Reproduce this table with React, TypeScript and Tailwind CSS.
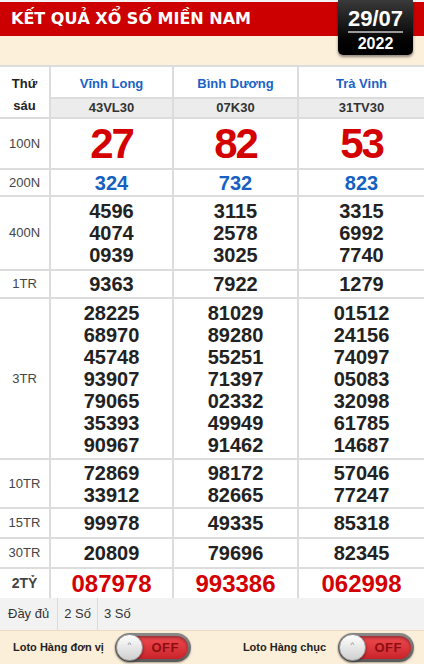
const stations = [
  { name: "Vĩnh Long", code: "43VL30" },
  { name: "Bình Dương", code: "07K30" },
  { name: "Trà Vinh", code: "31TV30" },
];

type Prize = {
  label: string;
  h: string;
  kind: "big" | "blue" | "normal" | "special";
  values: string[][];
};

const prizes: Prize[] = [
  { label: "100N", h: "h-[49px]", kind: "big", values: [["27"], ["82"], ["53"]] },
  { label: "200N", h: "h-[25px]", kind: "blue", values: [["324"], ["732"], ["823"]] },
  {
    label: "400N",
    h: "h-[72px]",
    kind: "normal",
    values: [
      ["4596", "4074", "0939"],
      ["3115", "2578", "3025"],
      ["3315", "6992", "7740"],
    ],
  },
  { label: "1TR", h: "h-[26px]", kind: "normal", values: [["9363"], ["7922"], ["1279"]] },
  {
    label: "3TR",
    h: "h-[159px]",
    kind: "normal",
    values: [
      ["28225", "68970", "45748", "93907", "79065", "35393", "90967"],
      ["81029", "89280", "55251", "71397", "02332", "49949", "91462"],
      ["01512", "24156", "74097", "05083", "32098", "61785", "14687"],
    ],
  },
  {
    label: "10TR",
    h: "h-[47px]",
    kind: "normal",
    values: [
      ["72869", "33912"],
      ["98172", "82665"],
      ["57046", "77247"],
    ],
  },
  { label: "15TR", h: "h-[28px]", kind: "normal", values: [["99978"], ["49335"], ["85318"]] },
  { label: "30TR", h: "h-[28px]", kind: "normal", values: [["20809"], ["79696"], ["82345"]] },
  { label: "2TỶ", h: "h-[29px]", kind: "special", values: [["087978"], ["993386"], ["062998"]] },
];

const numClass = {
  big: "text-[42px] leading-[42px] tracking-[-2px] text-[#d40000]",
  blue: "text-[20px] leading-[22px] text-[#1560c2]",
  normal: "text-[20px] leading-[22px] text-[#222]",
  special: "text-[24px] leading-[26px] text-[#d40000]",
};

function Toggle() {
  return (
    <div className="relative h-[29px] w-[76px] rounded-full bg-gradient-to-b from-[#8a8a8a] to-[#5a5a5a] p-[3px] shadow-[0_1px_2px_rgba(0,0,0,0.3)]">
      <div className="flex h-full w-full items-center justify-end rounded-full bg-gradient-to-b from-[#f04a4f] to-[#c9232a] pr-[9px] shadow-[inset_0_2px_3px_rgba(0,0,0,0.35)]">
        <span className="text-[13px] font-bold tracking-[0.5px] text-[#8e0d12]">OFF</span>
      </div>
      <div className="absolute left-[1px] top-[1px] flex h-[27px] w-[27px] items-start justify-center rounded-full border border-[#9a9a9a] bg-gradient-to-b from-[#ffffff] to-[#cfcfcf] shadow-[0_1px_3px_rgba(0,0,0,0.45)]">
        <span className="mt-[6px] text-[8px] leading-none text-[#777]">^</span>
      </div>
    </div>
  );
}

export default function App() {
  return (
    <div className="w-[424px] bg-white font-['Liberation_Sans',Arial,sans-serif]">
      {/* header */}
      <div className="relative h-[65px] bg-[#fdf0db] pt-[2px]">
        <div className="absolute inset-x-0 top-0 h-[2px] bg-[#f3f3f3]" />
        <div className="flex h-[34px] items-center bg-[#cc0000] pl-[11px]">
          <h1 className="font-['DejaVu_Sans',sans-serif] text-[16px] font-bold text-white">KẾT QUẢ XỔ SỐ MIỀN NAM</h1>
        </div>
        <div className="absolute right-[11px] top-0 flex h-[55px] w-[75px] flex-col items-center rounded-b-[5px] bg-gradient-to-b from-[#3a3a3a] via-[#151515] to-[#000] pt-[8px] shadow-[0_2px_3px_rgba(0,0,0,0.45)]">
          <div className="border-b-2 border-[#9a9a9a] pb-[1px] text-[22px] font-bold leading-[22px] text-white">29/07</div>
          <div className="mt-[3px] text-[16px] font-bold leading-[16px] text-white">2022</div>
        </div>
      </div>

      {/* results table */}
      <div className="grid grid-cols-[49px_121px_123px_1fr] gap-[2px] bg-[#dcdcdc] pt-[2px]">
        <div className="row-span-2 flex flex-col items-center justify-center bg-white pt-[5px] text-[13px] font-bold leading-[22px] text-[#222]">
          <span>Thứ</span>
          <span>sáu</span>
        </div>
        {stations.map((s) => (
          <div key={s.name} className="flex h-[30px] items-center justify-center bg-white pt-[3px] text-[13px] font-bold text-[#1a62c6]">
            {s.name}
          </div>
        ))}
        {stations.map((s) => (
          <div key={s.code} className="flex h-[18px] items-center justify-center bg-[#ececec] text-[13px] font-bold text-[#333]">
            {s.code}
          </div>
        ))}

        {prizes.map((p) => (
          <div key={p.label} className="contents">
            <div
              className={`flex ${p.h} items-center justify-center bg-white text-[#444] ${
                p.kind === "special" ? "text-[14px] font-bold text-[#222]" : "text-[13px]"
              }`}
            >
              {p.label}
            </div>
            {p.values.map((col, i) => (
              <div key={i} className={`flex ${p.h} flex-col items-center justify-center bg-white font-bold ${numClass[p.kind]}`}>
                {col.map((v) => (
                  <span key={v}>{v}</span>
                ))}
              </div>
            ))}
          </div>
        ))}
      </div>

      {/* tabs */}
      <div className="flex h-[32px] items-stretch bg-[#f2f2f2] text-[13px] text-[#333]">
        <div className="flex items-center border-r border-[#dadada] px-[8px]">Đầy đủ</div>
        <div className="flex items-center border-r border-[#dadada] px-[6px]">2 Số</div>
        <div className="flex items-center px-[6px]">3 Số</div>
      </div>

      {/* loto switches */}
      <div className="flex h-[34px] items-center justify-between border-t border-[#eadcc2] bg-[#fcefd9] pl-[13px] pr-[10px]">
        <div className="flex items-center gap-[11px]">
          <span className="text-[11px] font-bold text-[#222]">Loto Hàng đơn vị</span>
          <Toggle />
        </div>
        <div className="flex items-center gap-[12px]">
          <span className="text-[11px] font-bold text-[#222]">Loto Hàng chục</span>
          <Toggle />
        </div>
      </div>
    </div>
  );
}
